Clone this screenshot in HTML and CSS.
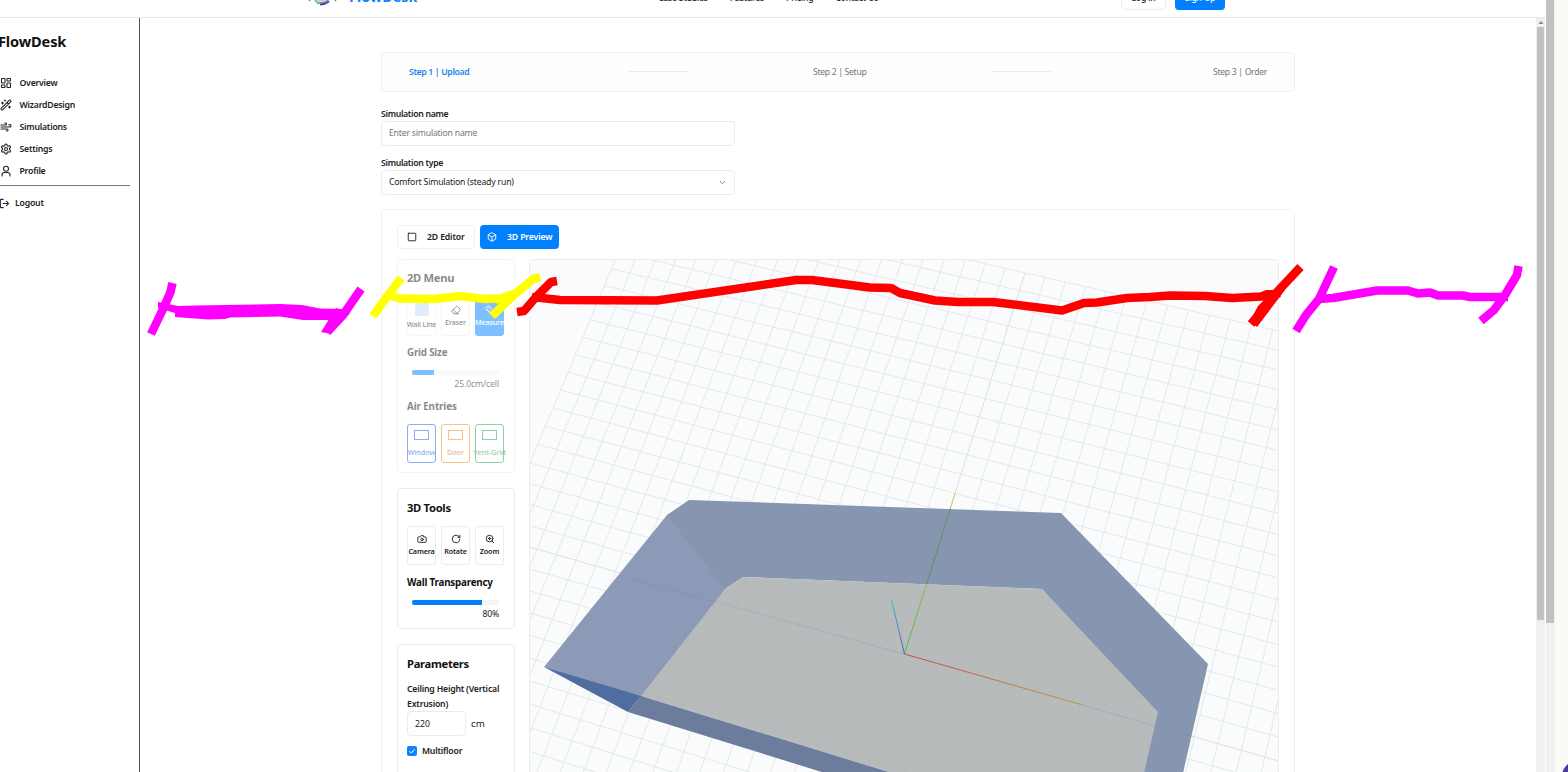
FILE: index.html
```html
<!DOCTYPE html>
<html lang="en">
<head>
<meta charset="utf-8">
<title>FlowDesk</title>
<link rel="stylesheet" href="styles.css">
</head>
<body>
<div class="window">
  <div class="app">
    <header class="topbar">
      <div class="brand">
        <svg class="brand-mark" width="30" height="20" viewBox="0 0 30 20"><circle cx="16" cy="6" r="10" fill="#efe9f5"/><path d="M8 12l4 4" stroke="#7cc29a" stroke-width="2"/><path d="M11 12q6 1 11-3" stroke="#e3d24f" stroke-width="2" fill="none"/><path d="M11 14.500q6 1 11-3" stroke="#4d9be0" stroke-width="1.500" fill="none"/><path d="M13 16.500q5 0 9-3" stroke="#5b3a91" stroke-width="1.800" fill="none"/><path d="M2 12l1 1M29 12l-1 1" stroke="#777" stroke-width="1.500"/></svg>
        <span class="brand-name">FlowDesk</span>
      </div>
      <nav class="nav"><a>Case Studies</a><a>Features</a><a>Pricing</a><a>Contact Us</a></nav>
      <div class="auth"><button class="btn login">Log in</button><button class="btn signup">Sign Up</button></div>
    </header>
    <div class="body">
      <aside class="sidebar">
        <h1 class="side-title">FlowDesk</h1>
        <ul class="menu">
          <li><svg class="ico" viewBox="0 0 24 24"><rect x="3" y="3" width="7" height="9" rx="1"/><rect x="14" y="3" width="7" height="5" rx="1"/><rect x="14" y="12" width="7" height="9" rx="1"/><rect x="3" y="16" width="7" height="5" rx="1"/></svg><span>Overview</span></li>
          <li><svg class="ico" viewBox="0 0 24 24"><path d="m21.640 3.640-1.280-1.280a1.210 1.210 0 0 0-1.720 0L2.360 18.640a1.210 1.210 0 0 0 0 1.720l1.280 1.280a1.200 1.200 0 0 0 1.720 0L21.640 5.360a1.200 1.200 0 0 0 0-1.720M14 7l3 3M5 6v4M19 14v4M10 2v2M7 8H3M21 16h-4M11 3H9"/></svg><span>WizardDesign</span></li>
          <li><svg class="ico" viewBox="0 0 24 24"><path d="M12.800 19.600A2 2 0 1 0 14 16H2M17.500 8a2.500 2.500 0 1 1 2 4H2M9.800 4.400A2 2 0 1 1 11 8H2"/></svg><span>Simulations</span></li>
          <li><svg class="ico" viewBox="0 0 24 24"><path d="M12.220 2h-.44a2 2 0 0 0-2 2v.18a2 2 0 0 1-1 1.730l-.43.25a2 2 0 0 1-2 0l-.15-.08a2 2 0 0 0-2.730.73l-.22.38a2 2 0 0 0 .73 2.730l.15.1a2 2 0 0 1 1 1.720v.51a2 2 0 0 1-1 1.740l-.15.09a2 2 0 0 0-.73 2.730l.22.38a2 2 0 0 0 2.730.73l.15-.08a2 2 0 0 1 2 0l.43.25a2 2 0 0 1 1 1.730V20a2 2 0 0 0 2 2h.44a2 2 0 0 0 2-2v-.18a2 2 0 0 1 1-1.730l.43-.25a2 2 0 0 1 2 0l.15.08a2 2 0 0 0 2.730-.73l.22-.39a2 2 0 0 0-.73-2.730l-.15-.08a2 2 0 0 1-1-1.740v-.5a2 2 0 0 1 1-1.740l.15-.09a2 2 0 0 0 .73-2.730l-.22-.38a2 2 0 0 0-2.730-.73l-.15.08a2 2 0 0 1-2 0l-.43-.25a2 2 0 0 1-1-1.730V4a2 2 0 0 0-2-2z"/><circle cx="12" cy="12" r="3"/></svg><span>Settings</span></li>
          <li><svg class="ico" viewBox="0 0 24 24"><circle cx="12" cy="7.500" r="5"/><path d="M4 22v-2a5 5 0 0 1 5-5h6a5 5 0 0 1 5 5v2"/></svg><span>Profile</span></li>
        </ul>
        <div class="logout"><svg class="ico" viewBox="0 0 24 24"><path d="M9 21H5a2 2 0 0 1-2-2V5a2 2 0 0 1 2-2h4M16 17l5-5-5-5M21 12H9"/></svg><span>Logout</span></div>
      </aside>
      <main class="main">
        <section class="steps"><span class="active">Step 1 | Upload</span><i></i><span>Step 2 | Setup</span><i></i><span>Step 3 | Order</span></section>
        <label class="label">Simulation name</label>
        <div class="field placeholder">Enter simulation name</div>
        <label class="label second">Simulation type</label>
        <div class="field"><span>Comfort Simulation (steady run)</span><svg class="chev" viewBox="0 0 24 24"><path d="m5 8 7 7 7-7"/></svg></div>
        <section class="workspace">
          <div class="tabs">
            <button class="tab"><svg class="ico" viewBox="0 0 24 24"><rect x="3" y="3" width="18" height="18" rx="1"/></svg><span>2D Editor</span></button>
            <button class="tab on"><svg class="ico" viewBox="0 0 24 24"><path d="M12 2l9 5v10l-9 5-9-5V7zM3 7l9 5 9-5M12 12v10"/></svg><span>3D Preview</span></button>
          </div>
          <div class="split">
            <div class="tools">
              <div class="card dim">
                <h2 class="t-menu">2D Menu</h2>
                <div class="row">
                  <div class="tool wall"><b class="swatch"></b><span>Wall Line</span></div>
                  <div class="tool"><svg class="ico" viewBox="0 0 24 24"><path d="m7 21-4.300-4.300c-1-1-1-2.500 0-3.400l9.600-9.600c1-1 2.500-1 3.400 0l5.600 5.600c1 1 1 2.500 0 3.400L13 21M7 21h12M5 11l9 9"/></svg><span>Eraser</span></div>
                  <div class="tool measure"><svg class="ico" viewBox="0 0 24 24"><path d="M2 8l6-6 14 14-6 6zM6 12l2-2M10 16l2-2M10 6l2-2"/></svg><span>Measure</span></div>
                </div>
                <h3 class="t-grid">Grid Size</h3>
                <div class="slider"><b class="fill-grid"></b></div>
                <p class="value">25.0cm/cell</p>
                <h3 class="t-air">Air Entries</h3>
                <div class="row">
                  <div class="tool air window-c"><b></b><span>Window</span></div>
                  <div class="tool air door-c"><b></b><span>Door</span></div>
                  <div class="tool air vent-c"><b></b><span>Vent-Grid</span></div>
                </div>
              </div>
              <div class="card three">
                <h2 class="t-menu">3D Tools</h2>
                <div class="row">
                  <div class="tool"><svg class="ico" viewBox="0 0 24 24"><path d="M14.500 4h-5L7 7H4a2 2 0 0 0-2 2v9a2 2 0 0 0 2 2h16a2 2 0 0 0 2-2V9a2 2 0 0 0-2-2h-3z"/><circle cx="12" cy="13" r="3"/></svg><span>Camera</span></div>
                  <div class="tool"><svg class="ico" viewBox="0 0 24 24"><path d="M21 12a9 9 0 1 1-9-9c2.520 0 4.930 1 6.740 2.740L21 8M21 3v5h-5"/></svg><span>Rotate</span></div>
                  <div class="tool"><svg class="ico" viewBox="0 0 24 24"><circle cx="11" cy="11" r="8"/><path d="m21 21-4.300-4.300M11 8v6M8 11h6"/></svg><span>Zoom</span></div>
                </div>
                <h3 class="t-grid">Wall Transparency</h3>
                <div class="slider"><b class="fill-wall"></b></div>
                <p class="value">80%</p>
              </div>
              <div class="card params">
                <h2 class="t-menu">Parameters</h2>
                <p class="plabel">Ceiling Height (Vertical<br>Extrusion)</p>
                <div class="height"><div class="num">220</div><span>cm</span></div>
                <div class="check"><svg viewBox="0 0 10 10"><rect width="10" height="10" rx="2" fill="#0a84ff"/><path d="M2.500 5.200l1.800 1.800 3.300-3.800" stroke="#fff" fill="none"/></svg><span>Multifloor</span></div>
              </div>
            </div>
            <div class="viewport">
              <svg id="scene" width="750" height="513" viewBox="530 260 750 513">
                <g id="grid" class="gridlines"></g>
                <polygon fill="#8796b0" points="689,500 1061,513 1208,664 1183,773 1144,773 1130,700 1042,589 743,577 725,589 640,640 667,515"/>
                <polygon fill="#8796b0" points="1042,585 1061,560 1190,700 1183,773 1144,773 1158,712"/>
                <polygon fill="#8c9ab8" points="667,515 725,589 743,610 641,698 544,667"/>
                <polygon fill="#b8bbbc" points="743,577 1042,589 1158,712 1144,773 892,773 641,696 725,589"/>
                <polygon fill="#6c7c9d" points="641,696 892,773 825,773 628,712"/>
                <polygon fill="#4f6e9f" points="544,667 641,696 628,712"/>
                <clipPath id="room"><polygon points="743,577 1042,589 1158,712 1144,773 892,773 641,696 725,589"/></clipPath>
                <g class="under" clip-path="url(#room)"><g id="grid-floor"></g></g>
                <path d="M629 578L904 654L1194 737" fill="none" stroke="#586579" stroke-opacity=".12"/>
                <defs>
                  <linearGradient id="ax" gradientUnits="userSpaceOnUse" x1="904" y1="654" x2="1081" y2="704"><stop stop-color="#c8504a"/><stop offset="1" stop-color="#c09a42"/></linearGradient>
                  <linearGradient id="ay" gradientUnits="userSpaceOnUse" x1="904" y1="654" x2="955" y2="493"><stop stop-color="#55b83f"/><stop offset=".43" stop-color="#8dbb46"/><stop offset=".44" stop-color="#5f8a66"/><stop offset=".9" stop-color="#6d8d5f"/><stop offset=".91" stop-color="#c3dc4a"/></linearGradient>
                  <linearGradient id="az" gradientUnits="userSpaceOnUse" x1="904" y1="654" x2="891" y2="600"><stop stop-color="#3d63c8"/><stop offset="1" stop-color="#43b4d0"/></linearGradient>
                </defs>
                <path d="M904.500 654L1081 704.500" stroke="url(#ax)"/><path d="M904.500 654L955.500 492.500" stroke="url(#ay)"/><path d="M904.500 654L891.500 600" stroke="url(#az)"/>
              </svg>
            </div>
          </div>
        </section>
      </main>
      <div class="scroll-inner"><svg viewBox="0 0 8 9"><path d="M1.500 6L4 3l2.500 3z" fill="#888"/></svg><b></b></div>
    </div>
  </div>
  <div class="scroll-outer"><b></b></div>
  <div class="margin"></div>
  <svg class="marks" width="1568" height="772" viewBox="0 0 1568 772">
    <g stroke="#f0f">
      <path d="M172.500 283L170.500 292L164 307L151 334"/>
      <path d="M361 289L343 315L327 332"/>
      <path class="solid" fill="#f0f" d="M158 302L178 306L195 305.500L280 304L302 305L320 308.500L343 309L336 320L303 320L280 316.500L230 317.500L225 319L208 319.500L175 317L175 313L158 308z"/>
      <path class="solid" fill="#f0f" d="M336 308L350 313L331 334L321 332z"/>
      <path d="M1334 267L1319 299L1306 315L1296 331"/>
      <path class="mid" d="M1318 299L1333 298L1377 290.500L1408 290.500L1418 293.500L1430 292.500L1438 295.500L1463 295.500L1470 297L1508 297"/>
      <path d="M1518.500 266L1517 275L1505 295L1494 310L1481 321"/>
    </g>
    <g stroke="#ff0">
      <path d="M401 278L386 298L373 316"/>
      <path class="mid" d="M390 296L400 298.500L435 299L460 296L485 299L510 298"/>
      <path d="M540 277L533 279L514 295L492 316"/>
      <path class="solid" fill="#ff0" d="M503 293L516 289L530 283L524 292L508 305L494 303z"/>
    </g>
    <g stroke="red">
      <path d="M557 281L551 282L536 297L524 311L517 312"/>
      <path class="mid" d="M532 297L560 300L657 300.500L796 280L812 280L870 287.500L891 288L900 293L935 300.500L958 302L993 302L1062 310.500L1084 303L1097 302.500L1127 298L1150 297L1170 295.500L1205 296L1232 298L1262 296.500L1280 293"/>
      <path d="M1300.500 267L1278 291L1262 311L1251 324"/>
      <path class="solid" fill="red" d="M1259 293L1266 290L1275 290L1280 286L1285 290L1257 327L1250 321L1258 306L1265 299z"/>
    </g>
  </svg>
  <div class="chat"></div>
</div>
<script src="scene.js"></script>
</body>
</html>
```
FILE: styles.css
```css
* { box-sizing: border-box; }
body { margin: 0; font-family: "Noto Sans", "Open Sans", sans-serif; font-size: 8.700px; letter-spacing: -.2px; color: #222; background: #fff; overflow: hidden; }
h1, h2, h3, p, ul { margin: 0; padding: 0; list-style: none; }
button { font: inherit; letter-spacing: inherit; padding: 0; cursor: pointer; }
span, a { white-space: nowrap; }
.window { position: relative; display: flex; width: 1568px; height: 772px; overflow: hidden; }
.app { width: 1546px; display: flex; flex-direction: column; }
.ico { fill: none; stroke: currentColor; stroke-width: 2.200; stroke-linecap: round; stroke-linejoin: round; flex: none; }

.topbar { height: 18px; flex: none; overflow: hidden; border-bottom: 1px solid #e9e9e9; display: flex; align-items: flex-start; width: 1545px; }
.brand { width: 658px; padding-left: 307px; display: flex; gap: 12px; margin-top: -12px; }
.brand-name { font-size: 14.300px; line-height: 20px; font-weight: 700; color: #0a84ff; letter-spacing: .05px; margin-top: -1px; }
.nav { width: 463px; display: flex; gap: 22px; font-weight: 500; line-height: 12px; margin-top: -8px; letter-spacing: -.22px; }
.auth { display: flex; gap: 9px; }
.btn { height: 25px; margin-top: -15px; border-radius: 4px; font-weight: 500; line-height: 12px; padding-top: 0; }
.login { width: 45px; background: #fff; border: 1px solid #ececec; color: #222; }
.signup { width: 50px; background: #0080ff; border: 0; color: #fff; }

.body { flex: 1; display: flex; min-height: 0; }
.sidebar { width: 140px; border-right: 1px solid #555; flex: none; }
.side-title { font-size: 14.600px; line-height: 20px; font-weight: 700; margin: 13px 0 21px -2px; color: #111; letter-spacing: -.15px; }
.menu { width: 130px; border-bottom: 1px solid #777; height: 114px; }
.menu li { display: flex; align-items: center; gap: 7.500px; height: 22px; font-weight: 600; letter-spacing: -.22px; }
.menu .ico { width: 12px; height: 12px; }
.logout { display: flex; align-items: center; gap: 5px; height: 20px; margin: 7px 0 0 -1px; font-weight: 600; }
.logout .ico { width: 11px; height: 11px; }

.main { width: 1396px; padding: 34px 0 0 241px; flex: none; overflow: hidden; }
.steps { width: 914px; height: 40px; border: 1px solid #efefef; border-radius: 5px; background: #fefefe; display: flex; align-items: center; justify-content: space-between; padding: 0 27px; color: #777; letter-spacing: -.34px; }
.steps .active { color: #1a86ee; font-weight: 600; letter-spacing: -.35px; }
.steps i { width: 60px; height: 1px; background: #ececec; margin-bottom: 1px; }
.steps i:nth-of-type(1) { margin-left: 34px; }
.steps i:nth-of-type(2) { margin-right: 37px; }
.label { display: block; height: 12px; line-height: 12px; margin: 16px 0 1px; font-weight: 600; letter-spacing: -.3px; }
.label.second { margin-top: 11px; }
.field { width: 354px; height: 25px; border: 1px solid #ebebeb; border-radius: 4px; display: flex; align-items: center; justify-content: space-between; padding: 0 7px 1px; letter-spacing: -.19px; }
.placeholder { color: #777; letter-spacing: -.21px; }
.chev { width: 9px; height: 9px; fill: none; stroke: #888; stroke-width: 2.500; }

.workspace { width: 914px; height: 600px; margin-top: 14px; border: 1px solid #efefef; border-radius: 5px; padding: 15px; }
.tabs { display: flex; gap: 5px; }
.tab { width: 78px; height: 24px; border: 1px solid #f0f0f0; border-radius: 4px; background: #fff; display: flex; align-items: center; gap: 10px; padding: 0 0 1px 9px; font-weight: 600; letter-spacing: -.15px; color: #222; }
.tab .ico { width: 10px; height: 10px; }
.tab.on { width: 79px; background: #0080ff; border: 0; color: #fff; padding-left: 7px; }
.split { display: flex; gap: 14px; margin-top: 10px; }
.tools { width: 118px; display: flex; flex-direction: column; gap: 15px; flex: none; }
.card { border: 1px solid #ebebeb; border-radius: 4px; padding: 9px 9px 0 9px; }
.dim { height: 214px; opacity: .5; }
.three { height: 141px; }
.params { height: 180px; padding-top: 10px; }
.t-menu { font-size: 11.200px; line-height: 18px; height: 27px; font-weight: 700; letter-spacing: -.3px; color: #111; }
.dim .t-menu { height: 28px; }
.three .t-menu { height: 27px; }
.three { padding-top: 10px; }
.row { display: flex; gap: 5px; }
.tool { width: 29px; height: 39px; border: 1px solid #ececec; border-radius: 3px; display: flex; flex-direction: column; align-items: center; padding-top: 7px; font-weight: 600; font-size: 7.200px; line-height: 10px; letter-spacing: -.15px; flex: none; }
.tool .ico { width: 10px; height: 10px; margin-bottom: 2px; }
.dim .tool { font-weight: 500; }
.tool.wall { padding-top: 4px; border-color: #f2f2f2; }
.swatch { width: 14px; height: 14px; background: #c6dcfb; margin-bottom: 3px; flex: none; }
.tool.measure { background: #0080ff; border-color: #0080ff; color: #fff; }
.t-grid { font-size: 9.800px; line-height: 14px; margin-top: 10.500px; font-weight: 700; height: 24px; letter-spacing: -.2px; color: #111; white-space: nowrap; }
.dim .t-grid { margin-top: 10px; height: 23.500px; }
.slider { width: 87px; height: 5px; margin-left: 5px; background: #f4f4f4; border-radius: 1px; display: flex; }
.slider b { background: #0080ff; border-radius: 2px 0 0 2px; }
.fill-grid { width: 22px; }
.fill-wall { width: 70px; }
.value { text-align: right; padding-right: 6px; line-height: 12px; margin-top: 3px; }
.dim .value { letter-spacing: -.15px; }
.t-air { font-size: 9.800px; line-height: 14px; height: 24px; margin-top: 10px; font-weight: 700; color: #111; letter-spacing: -.1px; }
.tool.air { border-color: currentColor; padding-top: 5px; font-size: 7.200px; letter-spacing: 0; }
.air b { width: 15px; height: 10px; border: 1px solid currentColor; margin-bottom: 7px; flex: none; }
.window-c { color: #2457ea; }
.door-c { color: #f08a10; }
.vent-c { color: #18a84c; }
.door-c span { color: #c07030; }
.plabel { font-weight: 600; line-height: 15px; white-space: nowrap; letter-spacing: -.2px; margin-top: 0; height: 29px; }
.height { display: flex; align-items: center; gap: 5px; font-size: 9.700px; letter-spacing: 0; }
.num { width: 59px; height: 25px; border: 1px solid #ebebeb; border-radius: 4px; padding-left: 7px; line-height: 24px; font-size: 8.700px; }
.check { display: flex; align-items: center; gap: 5px; margin-top: 8px; font-weight: 600; height: 13px; }
.check svg { width: 10px; height: 10px; }
.viewport { width: 751px; height: 520px; border: 1px solid #ebedee; border-radius: 4px; background: #f9fbfc; overflow: hidden; }
.viewport svg { display: block; }
.gridlines path { stroke: #e2e5e6; stroke-width: .85; fill: none; }
.gridlines .axis { stroke: #d9dcde; stroke-width: .9; }
.under { opacity: .09; }
.under path { stroke: #7d8386; stroke-width: .7; }

.scroll-inner { width: 9px; background: #f0f0f0; display: flex; flex-direction: column; padding-left: 1px; flex: none; }
.scroll-inner svg { width: 8px; height: 9px; }
.scroll-inner b { width: 7px; height: 593px; background: #c1c1c1; }
.scroll-outer { width: 9px; background: #f0f0f0; }
.scroll-outer b { display: block; width: 8px; height: 623px; background: #c1c1c1; }
.margin { flex: 1; background: #fbfaf6; }
.marks { position: absolute; left: 0; top: 0; fill: none; stroke-width: 8.500; stroke-linejoin: round; }
.marks .mid { stroke-width: 8.500; }
.marks .solid { stroke: none; }
.chat { position: absolute; left: 1562px; top: 761px; width: 30px; height: 30px; border-radius: 50%; background: #493a9c; }
```
FILE: scene.js
```js
// Projects the floor grid (40 x 40 cells) with two vanishing points.
const origin = [904, 654], vanishU = [-6329, -1411], vanishV = [2318, -3799];
const project = (u, v) => {
  const a = u * 0.00297, b = v * 0.00468, w = 1 + a + b;
  return [0, 1].map(i => ((origin[i] + a * vanishU[i] + b * vanishV[i]) / w).toFixed(1)).join(' ');
};
let lines = '';
for (let i = -20; i <= 20; i++) {
  const cls = i === 0 ? ' class="axis"' : '';
  lines += `<path${cls} d="M${project(i, -20)}L${project(i, 20)}"/>`;
  lines += `<path${cls} d="M${project(-20, i)}L${project(20, i)}"/>`;
}
document.getElementById('grid').innerHTML = lines;
document.getElementById('grid-floor').innerHTML = lines;
```
